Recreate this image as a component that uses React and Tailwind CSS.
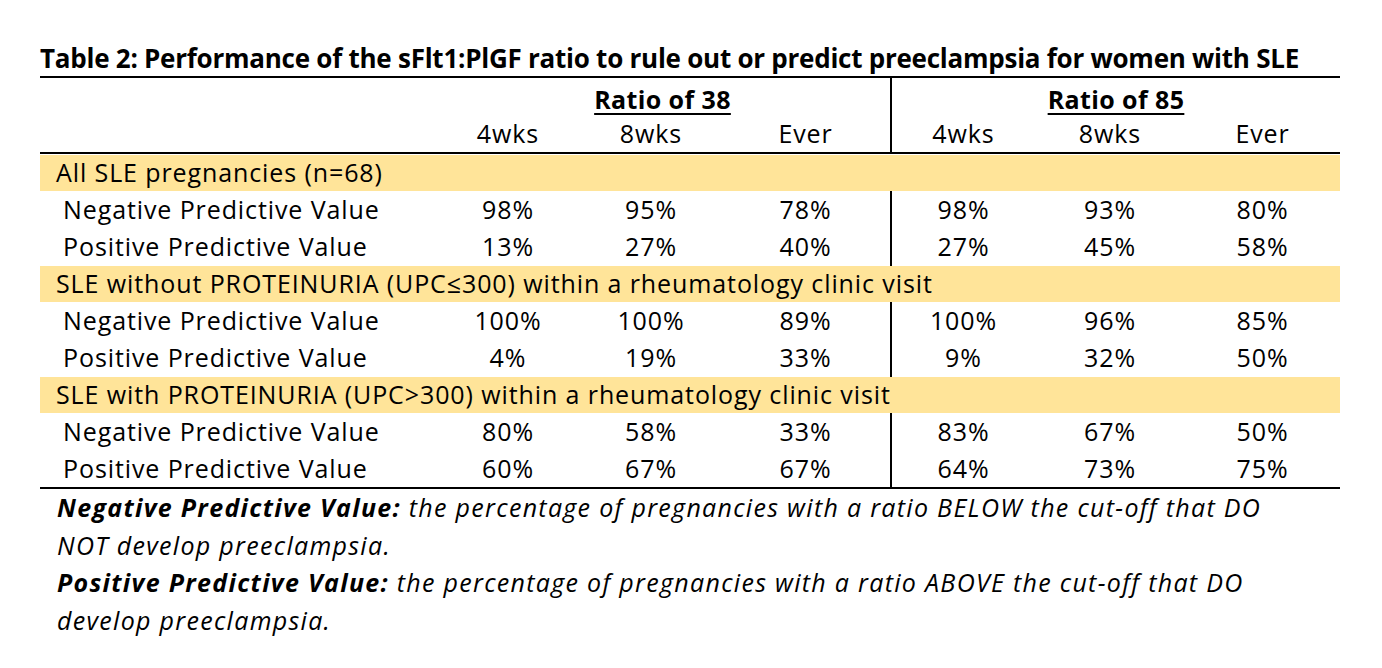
import React from "react";

const F = { fontFamily: "'Open Sans', Lato, sans-serif" };

const sections = [
  {
    title: "All SLE pregnancies (n=68)",
    rows: [
      ["Negative Predictive Value", "98%", "95%", "78%", "98%", "93%", "80%"],
      ["Positive Predictive Value", "13%", "27%", "40%", "27%", "45%", "58%"],
    ],
  },
  {
    title: "SLE without PROTEINURIA (UPC\u2264300) within a rheumatology clinic visit",
    rows: [
      ["Negative Predictive Value", "100%", "100%", "89%", "100%", "96%", "85%"],
      ["Positive Predictive Value", "4%", "19%", "33%", "9%", "32%", "50%"],
    ],
  },
  {
    title: "SLE with PROTEINURIA (UPC>300) within a rheumatology clinic visit",
    rows: [
      ["Negative Predictive Value", "80%", "58%", "33%", "83%", "67%", "50%"],
      ["Positive Predictive Value", "60%", "67%", "67%", "64%", "73%", "75%"],
    ],
  },
];

const ROW = "grid grid-cols-[395px_146px_140px_169px_145px_150px_155px] h-[37px] items-center";

export default function App() {
  return (
    <div className="w-[1382px] h-[668px] bg-white text-black overflow-hidden" style={F}>
      <div className="pl-[40px] pt-[40px]">
        <div className="w-[1300px] h-[36px] leading-[36px] text-[26px] tracking-[-0.25px] font-bold whitespace-nowrap border-b-2 border-black box-content">
          Table 2: Performance of the sFlt1:PlGF ratio to rule out or predict preeclampsia for women with SLE
        </div>
        <div className="w-[1300px] text-[25px] tracking-[0.9px]">
          <div className="grid grid-cols-[395px_455px_450px] h-[37px]">
            <div />
            <div className="flex items-end justify-center pb-[1px]">
              <span className="font-bold tracking-[0.4px] underline decoration-2 underline-offset-[4px] leading-[30px]">Ratio of 38</span>
            </div>
            <div className="flex items-end justify-center border-l-2 border-black pb-[1px]">
              <span className="font-bold tracking-[0.4px] underline decoration-2 underline-offset-[4px] leading-[30px]">Ratio of 85</span>
            </div>
          </div>
          <div className={ROW + " border-b-2 border-black box-content"}>
            <div />
            <div className="text-center">4wks</div>
            <div className="text-center">8wks</div>
            <div className="text-center">Ever</div>
            <div className="text-center border-l-2 border-black h-full flex items-center justify-center">4wks</div>
            <div className="text-center">8wks</div>
            <div className="text-center">Ever</div>
          </div>
          {sections.map((s, si) => (
            <div key={si}>
              <div className="h-[37px] pt-[1px]">
                <div className="h-full bg-[#ffe499] pl-[16px] flex items-center whitespace-nowrap">{s.title}</div>
              </div>
              {s.rows.map((r, ri) => (
                <div key={ri} className={ROW}>
                  <div className="pl-[23px] whitespace-nowrap">{r[0]}</div>
                  <div className="text-center">{r[1]}</div>
                  <div className="text-center">{r[2]}</div>
                  <div className="text-center">{r[3]}</div>
                  <div className="border-l-2 border-black h-full flex items-center justify-center">{r[4]}</div>
                  <div className="text-center">{r[5]}</div>
                  <div className="text-center">{r[6]}</div>
                </div>
              ))}
            </div>
          ))}
          <div className="h-[2px] bg-black" />
        </div>
        <div className="pl-[17px] text-[25px] tracking-[1.3px] italic leading-[37.5px]">
          <div className="whitespace-nowrap"><span className="font-bold">Negative Predictive Value:</span> the percentage of pregnancies with a ratio BELOW the cut-off that DO</div>
          <div className="whitespace-nowrap">NOT develop preeclampsia.</div>
          <div className="whitespace-nowrap"><span className="font-bold">Positive Predictive Value:</span> the percentage of pregnancies with a ratio ABOVE the cut-off that DO</div>
          <div className="whitespace-nowrap">develop preeclampsia.</div>
        </div>
      </div>
    </div>
  );
}
